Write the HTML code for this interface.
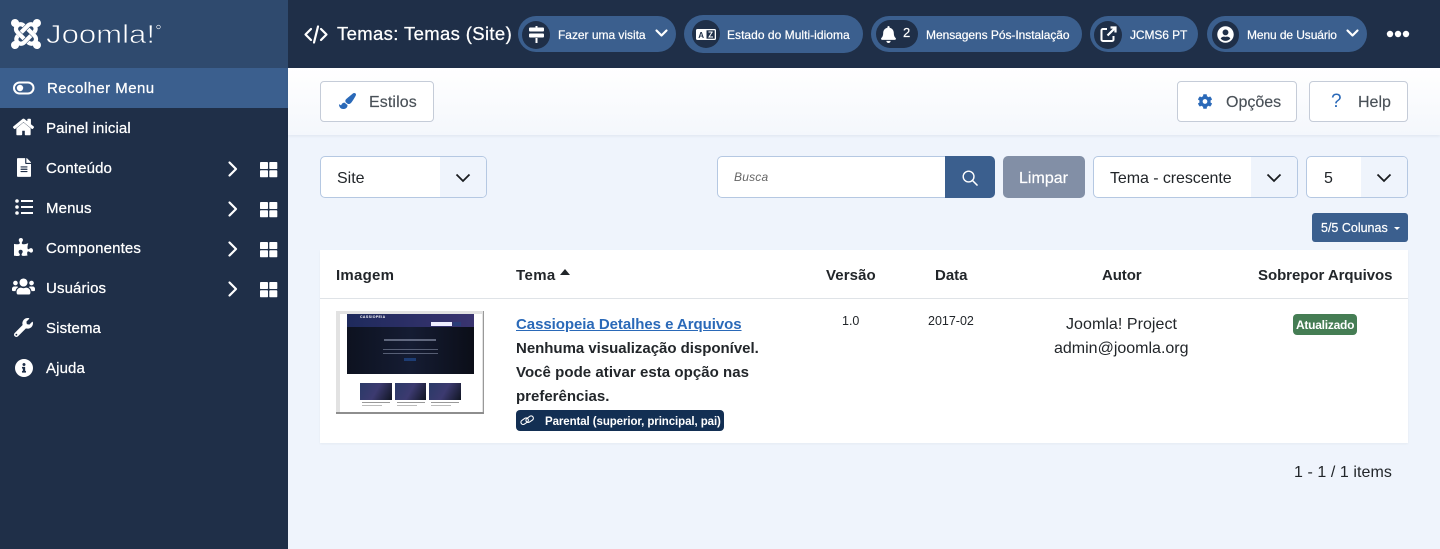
<!DOCTYPE html>
<html lang="pt"><head><meta charset="utf-8"><title>Temas</title>
<style>
html,body{margin:0;padding:0;width:1440px;height:549px;overflow:hidden;background:#eff4fc;font-family:"Liberation Sans",sans-serif;color:#22262a}
.a{position:absolute}
.t{position:absolute;white-space:nowrap}
svg{position:absolute;overflow:visible}
.nav{color:#fff;font-size:15px;line-height:20px;-webkit-text-stroke:.25px #fff;letter-spacing:.12px}
.pill{position:absolute;top:16px;height:36px;background:#3b5f8e;border-radius:18px}
.circ{position:absolute;background:#1f2f48;border-radius:14px;top:21px;height:28px}
.pt{position:absolute;white-space:nowrap;color:#fff;font-size:12px;line-height:20px;top:25px;-webkit-text-stroke:.2px #fff}
.btn{position:absolute;top:81px;height:39px;background:#fff;border:1px solid #c5ccd8;border-radius:4px}
.bt{position:absolute;white-space:nowrap;top:93px;font-size:16px;line-height:20px;color:#495057;-webkit-text-stroke:.15px #495057}
.sel{position:absolute;top:156px;height:40px;background:#fff;border:1px solid #b5c8e2;border-radius:5px;overflow:hidden}
.sel i{position:absolute;right:0;top:0;bottom:0;background:#eff4fc}
.st{position:absolute;white-space:nowrap;top:169px;font-size:16px;line-height:20px;color:#22262a}
.th{position:absolute;white-space:nowrap;top:266px;font-size:15px;line-height:20px;font-weight:bold;color:#22262a}
.c{stroke:#fff;fill:none;stroke-width:2.2;stroke-linecap:round;stroke-linejoin:round}
</style></head><body>

<div class="a" style="left:0;top:0;width:288px;height:549px;background:#1f2f48"></div>
<div class="a" style="left:0;top:0;width:288px;height:68px;background:#2f4a6e"></div>
<div class="a" style="left:0;top:68px;width:288px;height:40px;background:#3b5f8e"></div>
<div class="a" style="left:288px;top:0;width:1152px;height:68px;background:#1f2f48"></div>
<div class="a" style="left:288px;top:68px;width:1152px;height:67px;background:linear-gradient(#fff,#f4f7fc);box-shadow:0 1px 3px rgba(30,50,80,.08)"></div>

<!-- logo -->
<svg style="left:11px;top:19px" width="30" height="30" viewBox="0 32 448 448" fill="#fff">
<g><path d="M.6 92.1C.6 58.8 27.4 32 60.4 32c30 0 54.5 21.9 59.2 50.2 32.6-7.6 67.1.6 96.5 30l-44.3 44.3c-20.5-20.5-42.6-16.3-55.4-3.5-14.3 14.3-14.3 37.9 0 52.2l99.5 99.5-44 44.3c-87.7-87.2-49.7-49.7-99.8-99.7-26.8-26.5-35-64.8-24.8-98.9C20.4 144.6.6 120.7.6 92.1z"/><path d="M130.1 208.5l44.3 44.3c10-10 89.7-89.7 99.7-99.8 14.3-14.3 37.6-14.3 51.9 0 12.8 12.8 17 35-3.5 55.4l44 44.3c31.2-31.2 38.5-67.6 28.9-101.2 29.2-4.100 51.9-29.2 51.9-59.5 0-33.2-26.8-60.1-59.8-60.1-30.3 0-55.4 22.5-59.5 51.6-33.8-9.900-71.7-1.500-98.3 25.1-18.3 19.100-71.1 71.500-100.600 101.100z"/></g>
<g transform="rotate(180 224 256)"><path d="M.6 92.1C.6 58.8 27.4 32 60.4 32c30 0 54.5 21.9 59.2 50.2 32.6-7.6 67.1.6 96.5 30l-44.3 44.3c-20.5-20.5-42.6-16.3-55.4-3.5-14.3 14.3-14.3 37.9 0 52.2l99.5 99.5-44 44.3c-87.7-87.2-49.7-49.7-99.8-99.7-26.8-26.5-35-64.8-24.8-98.9C20.4 144.6.6 120.7.6 92.1z"/><path d="M130.1 208.5l44.3 44.3c10-10 89.7-89.7 99.7-99.8 14.3-14.3 37.6-14.3 51.9 0 12.8 12.8 17 35-3.5 55.4l44 44.3c31.2-31.2 38.5-67.6 28.9-101.2 29.2-4.100 51.9-29.2 51.9-59.5 0-33.2-26.8-60.1-59.8-60.1-30.3 0-55.4 22.5-59.5 51.6-33.8-9.900-71.7-1.500-98.3 25.1-18.3 19.100-71.1 71.500-100.600 101.100z"/></g>
</svg>
<svg style="left:46px;top:18px" width="120" height="30" viewBox="0 0 120 30">
<text x="0" y="25" font-family="Liberation Sans" font-size="26" fill="#fff" stroke="#2f4a6e" stroke-width=".7" textLength="109" lengthAdjust="spacingAndGlyphs">Joomla!</text>
<circle cx="112.500" cy="9" r="1.800" fill="none" stroke="#fff" stroke-width=".6"/>
</svg>

<!-- sidebar -->
<svg style="left:13px;top:81px" width="22" height="14" viewBox="0 0 22 14"><rect x="1" y="1.500" width="19.500" height="11" rx="5.500" fill="none" stroke="#fff" stroke-width="2"/><circle cx="7" cy="7" r="3.200" fill="#fff"/></svg>
<div class="t nav" style="left:47px;top:79px;letter-spacing:.45px">Recolher Menu</div>

<svg style="left:13px;top:118px" width="21" height="18" viewBox="0 0 576 512" fill="#fff" stroke="#fff" stroke-width="22"><path d="M280.37 148.26L96 300.11V464a16 16 0 0 0 16 16l112.06-.29a16 16 0 0 0 15.92-16V368a16 16 0 0 1 16-16h64a16 16 0 0 1 16 16v95.64a16 16 0 0 0 16 16.05L464 480a16 16 0 0 0 16-16V300L295.67 148.26a12.19 12.19 0 0 0-15.3 0zM571.6 251.47L488 182.56V44.05a12 12 0 0 0-12-12h-56a12 12 0 0 0-12 12v72.61L318.47 43a48 48 0 0 0-61 0L4.34 251.47a12 12 0 0 0-1.6 16.9l25.5 31A12 12 0 0 0 45.15 301l235.22-193.74a12.19 12.19 0 0 1 15.3 0L530.9 301a12 12 0 0 0 16.9-1.6l25.5-31a12 12 0 0 0-1.7-16.93z"/></svg>
<div class="t nav" style="left:46px;top:119px;letter-spacing:.1px">Painel inicial</div>

<svg style="left:17px;top:158px" width="14" height="19" viewBox="0 0 384 512" fill="#fff"><path d="M224 136V0H24C10.7 0 0 10.7 0 24v464c0 13.3 10.700 24 24 24h336c13.300 0 24-10.700 24-24V160H248c-13.200 0-24-10.800-24-24zm64 236c0 6.600-5.400 12-12 12H108c-6.600 0-12-5.400-12-12v-8c0-6.600 5.400-12 12-12h168c6.600 0 12 5.400 12 12v8zm0-64c0 6.600-5.400 12-12 12H108c-6.600 0-12-5.400-12-12v-8c0-6.600 5.400-12 12-12h168c6.600 0 12 5.400 12 12v8zm0-72v8c0 6.600-5.400 12-12 12H108c-6.600 0-12-5.400-12-12v-8c0-6.600 5.400-12 12-12h168c6.600 0 12 5.400 12 12zm96-114.100v6.100H256V0h6.100c6.400 0 12.500 2.500 17 7l97.900 98c4.500 4.500 7 10.600 7 16.900z"/></svg>
<div class="t nav" style="left:46px;top:159px">Conteúdo</div>

<svg style="left:15px;top:199px" width="18" height="16" viewBox="0 0 18 16" fill="#fff"><circle cx="2" cy="2" r="1.800"/><circle cx="2" cy="8" r="1.800"/><circle cx="2" cy="14" r="1.800"/><rect x="6" y="1" width="12" height="2"/><rect x="6" y="7" width="12" height="2"/><rect x="6" y="13" width="12" height="2"/></svg>
<div class="t nav" style="left:46px;top:199px">Menus</div>

<svg style="left:14px;top:238px" width="19" height="18" viewBox="0 0 576 512" fill="#fff" preserveAspectRatio="none"><path d="M519.442 288.651c-41.519 0-59.5 31.593-82.058 31.593C377.409 320.244 432 144 432 144s-196.288 80-196.288-3.297c0-35.827 36.288-46.250 36.288-85.985C272 19.216 243.885 0 210.539 0c-34.654 0-66.366 18.891-66.366 56.346 0 41.364 31.711 59.277 31.711 81.750C175.885 207.719 0 166.758 0 166.758v333.237s178.635 41.047 178.635-28.662c0-22.473-40-40.107-40-81.471 0-37.456 29.250-56.346 63.577-56.346 33.673 0 61.788 19.216 61.788 54.717 0 39.735-36.288 50.158-36.288 85.985 0 60.803 129.675 25.730 181.230 25.730 0 0-34.725-120.101 25.827-120.101 35.962 0 46.423 36.152 86.308 36.152C556.712 416 576 387.990 576 354.443c0-34.199-18.962-65.792-56.558-65.792z"/></svg>
<div class="t nav" style="left:46px;top:239px;letter-spacing:.15px">Componentes</div>

<svg style="left:12px;top:277px" width="23" height="19" viewBox="0 0 640 512" fill="#fff"><path d="M96 224c35.300 0 64-28.700 64-64s-28.700-64-64-64-64 28.700-64 64 28.700 64 64 64zm448 0c35.300 0 64-28.700 64-64s-28.700-64-64-64-64 28.700-64 64 28.700 64 64 64zm32 32h-64c-17.600 0-33.500 7.100-45.100 18.600 40.300 22.100 68.900 62 75.100 109.400h66c17.700 0 32-14.300 32-32v-32c0-35.300-28.700-64-64-64zm-256 0c61.900 0 112-50.100 112-112S381.900 32 320 32 208 82.100 208 144s50.100 112 112 112zm76.800 32h-8.300c-20.800 10-43.900 16-68.500 16s-47.600-6-68.500-16h-8.300C179.600 288 128 339.600 128 403.200V432c0 26.500 21.500 48 48 48h288c26.500 0 48-21.500 48-48v-28.800c0-63.600-51.600-115.200-115.200-115.200zm-223.700-13.400C161.500 263.100 145.600 256 128 256H64c-35.300 0-64 28.700-64 64v32c0 17.700 14.300 32 32 32h65.900c6.300-47.400 34.900-87.300 75.200-109.400z"/></svg>
<div class="t nav" style="left:46px;top:279px">Usuários</div>

<svg style="left:14px;top:318px" width="19" height="19" viewBox="0 0 512 512" fill="#fff"><path d="M507.730 109.100c-2.240-9.030-13.540-12.090-20.120-5.510l-74.360 74.360-67.880-11.310-11.310-67.880 74.360-74.360c6.620-6.620 3.430-17.900-5.660-20.160-47.380-11.740-99.550.91-136.580 37.930-39.640 39.640-50.550 97.100-34.050 147.200L18.740 402.760c-24.990 24.990-24.990 65.510 0 90.500 24.990 24.990 65.510 24.990 90.500 0l213.210-213.210c50.120 16.710 107.470 5.680 147.370-34.220 37.070-37.070 49.700-89.320 37.910-136.730zM64 472c-13.250 0-24-10.750-24-24 0-13.260 10.750-24 24-24s24 10.740 24 24c0 13.250-10.750 24-24 24z"/></svg>
<div class="t nav" style="left:46px;top:319px">Sistema</div>

<svg style="left:14.500px;top:358.500px" width="18" height="18" viewBox="8 8 496 496" fill="#fff"><path d="M256 8C119.043 8 8 119.083 8 256c0 136.997 111.043 248 248 248s248-111.003 248-248C504 119.083 392.957 8 256 8zm0 110c23.196 0 42 18.804 42 42s-18.804 42-42 42-42-18.804-42-42 18.804-42 42-42zm56 254c0 6.627-5.373 12-12 12h-88c-6.627 0-12-5.373-12-12v-24c0-6.627 5.373-12 12-12h12v-64h-12c-6.627 0-12-5.373-12-12v-24c0-6.627 5.373-12 12-12h64c6.627 0 12 5.373 12 12v100h12c6.627 0 12 5.373 12 12v24z"/></svg>
<div class="t nav" style="left:46px;top:359px">Ajuda</div>

<!-- chevrons and grids -->
<svg style="left:228px;top:160.500px" width="10" height="16" viewBox="0 0 10 16"><path class="c" d="M1.500 1.500L8 8l-6.500 6.500"/></svg>
<svg style="left:228px;top:200.500px" width="10" height="16" viewBox="0 0 10 16"><path class="c" d="M1.500 1.500L8 8l-6.500 6.500"/></svg>
<svg style="left:228px;top:240.500px" width="10" height="16" viewBox="0 0 10 16"><path class="c" d="M1.500 1.500L8 8l-6.500 6.500"/></svg>
<svg style="left:228px;top:280.500px" width="10" height="16" viewBox="0 0 10 16"><path class="c" d="M1.500 1.500L8 8l-6.500 6.500"/></svg>
<svg style="left:260px;top:162px" width="17" height="15" fill="#fff"><rect width="8" height="7" rx=".8"/><rect x="9.300" width="8" height="7" rx=".8"/><rect y="8.300" width="8" height="7" rx=".8"/><rect x="9.300" y="8.300" width="8" height="7" rx=".8"/></svg>
<svg style="left:260px;top:202px" width="17" height="15" fill="#fff"><rect width="8" height="7" rx=".8"/><rect x="9.300" width="8" height="7" rx=".8"/><rect y="8.300" width="8" height="7" rx=".8"/><rect x="9.300" y="8.300" width="8" height="7" rx=".8"/></svg>
<svg style="left:260px;top:242px" width="17" height="15" fill="#fff"><rect width="8" height="7" rx=".8"/><rect x="9.300" width="8" height="7" rx=".8"/><rect y="8.300" width="8" height="7" rx=".8"/><rect x="9.300" y="8.300" width="8" height="7" rx=".8"/></svg>
<svg style="left:260px;top:282px" width="17" height="15" fill="#fff"><rect width="8" height="7" rx=".8"/><rect x="9.300" width="8" height="7" rx=".8"/><rect y="8.300" width="8" height="7" rx=".8"/><rect x="9.300" y="8.300" width="8" height="7" rx=".8"/></svg>

<!-- header -->
<svg style="left:304px;top:25px" width="24" height="19" viewBox="0 0 24 19"><path class="c" d="M7 4L1.500 9.500 7 15M17 4l5.500 5.500L17 15M14 1.500L10 17.500" stroke-width="2"/></svg>
<div class="t" style="left:337px;top:23px;font-size:18.500px;line-height:22px;color:#fff;-webkit-text-stroke:.25px #fff;letter-spacing:.36px">Temas: Temas (Site)</div>

<div class="pill" style="left:518px;width:158px"></div>
<div class="circ" style="left:522px;width:28px"></div>
<svg style="left:529px;top:26px" width="15" height="17" viewBox="0 0 15 17" fill="#fff"><rect x="0" y="1.500" width="15" height="4" rx="1"/><rect x="0" y="7.500" width="15" height="4" rx="1"/><rect x="6.500" y="0" width="2" height="2"/><rect x="6.500" y="12" width="2" height="5"/></svg>
<div class="pt" style="left:558px;letter-spacing:-.03px">Fazer uma visita</div>
<svg style="left:655px;top:29px" width="13" height="9" viewBox="0 0 13 9"><path class="c" d="M1.500 1.500l5 5 5-5"/></svg>

<div class="pill" style="left:684px;width:179px;top:15px;height:38px;border-radius:19px"></div>
<div class="circ" style="left:692px;width:28px;top:20px"></div>
<svg style="left:696px;top:29px" width="20" height="11" viewBox="0 0 20 11"><rect width="20" height="11" rx="1.500" fill="#fff"/><rect x="10.500" y="1.300" width="8.200" height="8.400" fill="#1f2f48"/><path d="M12.500 3h4.200M16.200 3L13 8h4" fill="none" stroke="#fff" stroke-width="1"/><text x="2.300" y="8.800" font-size="8" font-weight="bold" fill="#1f2f48" font-family="Liberation Sans">A</text></svg>
<div class="pt" style="left:727px;letter-spacing:.03px">Estado do Multi-idioma</div>

<div class="pill" style="left:871px;width:211px"></div>
<div class="circ" style="left:876px;width:42px;top:20px"></div>
<svg style="left:881px;top:26px" width="15" height="17" viewBox="0 0 448 512" fill="#fff"><path d="M224 512c35.320 0 63.970-28.650 63.970-64H160.030c0 35.350 28.650 64 63.970 64zm215.390-149.710c-19.320-20.760-55.470-51.990-55.470-154.290 0-77.700-54.480-139.900-127.940-155.160V32c0-17.670-14.320-32-31.980-32s-31.980 14.330-31.980 32v20.840C118.560 68.100 64.080 130.300 64.080 208c0 102.300-36.150 133.530-55.470 154.290-6 6.450-8.660 14.160-8.610 21.710.11 16.400 12.980 32 32.100 32h383.800c19.120 0 32-15.600 32.100-32 .05-7.550-2.610-15.270-8.610-21.710z"/></svg>
<div class="pt" style="left:903px;top:23px;font-size:13px">2</div>
<div class="pt" style="left:926px;letter-spacing:-.05px">Mensagens Pós-Instalação</div>

<div class="pill" style="left:1090px;width:108px"></div>
<div class="circ" style="left:1094px;width:28px"></div>
<svg style="left:1100px;top:26px" width="17" height="17" viewBox="0 0 17 17"><path d="M7 3H3a1.500 1.500 0 0 0-1.500 1.500v9A1.500 1.500 0 0 0 3 15h9a1.500 1.500 0 0 0 1.500-1.500V10" fill="none" stroke="#fff" stroke-width="2"/><path d="M7.500 9.500L15 2M10.500 1.500h5v5" fill="none" stroke="#fff" stroke-width="2.200"/></svg>
<div class="pt" style="left:1130px;letter-spacing:-.1px">JCMS6 PT</div>

<div class="pill" style="left:1207px;width:160px"></div>
<div class="circ" style="left:1212px;width:27px"></div>
<svg style="left:1217px;top:26px" width="17" height="17" viewBox="0 0 496 512" fill="#fff"><path d="M248 8C111 8 0 119 0 256s111 248 248 248 248-111 248-248S385 8 248 8zm0 96c48.600 0 88 39.400 88 88s-39.400 88-88 88-88-39.400-88-88 39.400-88 88-88zm0 344c-58.700 0-111.300-26.600-146.500-68.200 18.800-35.400 55.600-59.800 98.500-59.800 2.400 0 4.800.4 7.100 1.100 13 4.200 26.600 6.900 40.900 6.900 14.300 0 28-2.700 40.900-6.900 2.300-.7 4.700-1.100 7.100-1.100 42.900 0 79.700 24.400 98.500 59.800C359.300 421.400 306.700 448 248 448z"/></svg>
<div class="pt" style="left:1247px;letter-spacing:-.1px">Menu de Usuário</div>
<svg style="left:1346px;top:29px" width="13" height="9" viewBox="0 0 13 9"><path class="c" d="M1.500 1.500l5 5 5-5"/></svg>
<svg style="left:1386px;top:30px" width="24" height="8" fill="#fff"><circle cx="4" cy="4" r="3.200"/><circle cx="12" cy="4" r="3.200"/><circle cx="20" cy="4" r="3.200"/></svg>

<!-- toolbar -->
<div class="btn" style="left:320px;width:112px"></div>
<svg style="left:339px;top:93px" width="17" height="16" viewBox="0 0 512 512" preserveAspectRatio="none" fill="#2a69b8"><path d="M167.020 309.340c-40.120 2.580-76.530 17.860-97.190 72.300-2.350 6.210-8 9.980-14.590 9.980-11.110 0-45.460-27.670-55.250-34.350C0 439.620 37.930 512 128 512c75.860 0 128-43.770 128-120.190 0-3.110-.65-6.080-.97-9.130l-88.010-73.340zM457.890 0c-15.160 0-29.370 6.710-40.210 16.450C213.270 199.050 192 203.340 192 257.090c0 13.700 3.250 26.760 8.730 38.700l63.820 53.180c7.210 1.800 14.640 3.030 22.390 3.030 62.110 0 98.110-45.470 211.160-256.460 7.380-14.350 13.900-29.850 13.900-45.990C512 20.640 486 0 457.890 0z"/></svg>
<div class="bt" style="left:369px;letter-spacing:.1px">Estilos</div>

<div class="btn" style="left:1177px;width:118px"></div>
<svg style="left:1196.500px;top:94px" width="16" height="15" viewBox="0 0 512 512" fill="#2a69b8"><path d="M487.400 315.700l-42.600-24.600c4.300-23.200 4.300-47 0-70.200l42.600-24.600c4.900-2.800 7.100-8.600 5.500-14-11.100-35.600-30-67.800-54.700-94.600-3.800-4.100-10-5.100-14.800-2.300L380.800 110c-17.900-15.400-38.500-27.300-60.800-35.100V25.800c0-5.600-3.900-10.500-9.400-11.700-36.700-8.200-74.300-7.800-109.200 0-5.500 1.200-9.400 6.100-9.400 11.700V75c-22.200 7.900-42.800 19.800-60.800 35.100L88.700 85.500c-4.900-2.800-11-1.900-14.800 2.300-24.700 26.700-43.600 58.900-54.700 94.600-1.700 5.400.6 11.200 5.500 14L67.300 221c-4.300 23.200-4.300 47 0 70.200l-42.600 24.600c-4.900 2.800-7.100 8.600-5.500 14 11.100 35.600 30 67.800 54.700 94.600 3.800 4.100 10 5.100 14.800 2.300l42.600-24.600c17.900 15.400 38.500 27.300 60.800 35.100v49.200c0 5.600 3.900 10.500 9.400 11.700 36.700 8.200 74.300 7.800 109.200 0 5.500-1.200 9.400-6.100 9.400-11.700v-49.200c22.200-7.900 42.800-19.800 60.800-35.100l42.600 24.600c4.900 2.800 11 1.900 14.800-2.300 24.700-26.700 43.600-58.900 54.700-94.600 1.500-5.500-.7-11.300-5.600-14.100zM256 336c-44.100 0-80-35.900-80-80s35.900-80 80-80 80 35.900 80 80-35.900 80-80 80z"/></svg>
<div class="bt" style="left:1226px">Opções</div>

<div class="btn" style="left:1309px;width:97px"></div>
<div class="t" style="left:1331px;top:92px;font-size:19px;line-height:20px;color:#2a69b8">?</div>
<div class="bt" style="left:1358px">Help</div>

<!-- filters -->
<div class="sel" style="left:320px;width:165px"><i style="width:46px"></i></div>
<div class="st" style="left:337px">Site</div>
<svg style="left:455px;top:173px" width="16" height="10" viewBox="0 0 16 10"><path d="M1.500 1.500L8 8l6.500-6.500" fill="none" stroke="#1a1d20" stroke-width="1.800"/></svg>

<div class="a" style="left:717px;top:156px;width:228px;height:40px;background:#fff;border:1px solid #b5c8e2;border-right:0;border-radius:5px 0 0 5px"></div>
<div class="t" style="left:734px;top:167px;font-size:12px;line-height:20px;font-style:italic;color:#666;letter-spacing:.2px">Busca</div>
<div class="a" style="left:945px;top:156px;width:50px;height:42px;background:#3b5f8e;border-radius:0 5px 5px 0"></div>
<svg style="left:962px;top:169.500px" width="16" height="16" viewBox="0 0 17 17"><circle cx="7" cy="7" r="5.700" fill="none" stroke="#fff" stroke-width="1.500"/><path d="M11 11l5 5" stroke="#fff" stroke-width="1.600" stroke-linecap="round"/></svg>
<div class="a" style="left:1003px;top:156px;width:82px;height:42px;background:#828fa6;border-radius:5px"></div>
<div class="t" style="left:1019px;top:169px;font-size:16px;line-height:20px;color:#fff;-webkit-text-stroke:.2px #fff;letter-spacing:.02px">Limpar</div>

<div class="sel" style="left:1093px;width:203px"><i style="width:46px"></i></div>
<div class="st" style="left:1110px;letter-spacing:-.07px">Tema - crescente</div>
<svg style="left:1266px;top:173px" width="16" height="10" viewBox="0 0 16 10"><path d="M1.500 1.500L8 8l6.500-6.500" fill="none" stroke="#1a1d20" stroke-width="1.800"/></svg>

<div class="sel" style="left:1306px;width:100px"><i style="width:46px"></i></div>
<div class="st" style="left:1324px">5</div>
<svg style="left:1376px;top:173px" width="16" height="10" viewBox="0 0 16 10"><path d="M1.500 1.500L8 8l6.500-6.500" fill="none" stroke="#1a1d20" stroke-width="1.800"/></svg>

<div class="a" style="left:1312px;top:213px;width:96px;height:29px;background:#3b5f8e;border-radius:3px"></div>
<div class="t" style="left:1321px;top:218px;font-size:12.500px;line-height:20px;color:#fff;-webkit-text-stroke:.2px #fff">5/5 Colunas</div>
<div class="a" style="left:1393.500px;top:227px;border:3px solid transparent;border-top-color:#fff;border-bottom:0"></div>

<!-- table -->
<div class="a" style="left:320px;top:250px;width:1088px;height:193px;background:#fff;box-shadow:0 1px 2px rgba(30,50,80,.05)"></div>
<div class="a" style="left:320px;top:298px;width:1088px;height:1px;background:#dfe3e7"></div>
<div class="th" style="left:336px;letter-spacing:.25px">Imagem</div>
<div class="th" style="left:516px;letter-spacing:.4px">Tema</div>
<div class="a" style="left:560px;top:269px;border:5px solid transparent;border-bottom:6px solid #22262a;border-top:0"></div>
<div class="th" style="left:826px;letter-spacing:.1px">Versão</div>
<div class="th" style="left:935px">Data</div>
<div class="th" style="left:1102px;letter-spacing:-.1px">Autor</div>
<div class="th" style="left:1258px;letter-spacing:-.05px">Sobrepor Arquivos</div>

<!-- thumbnail -->
<div class="a" style="left:336px;top:311px;width:148px;height:103px;background:#e2e2e2"></div>
<div class="a" style="left:483px;top:311px;width:1px;height:103px;background:#999"></div>
<div class="a" style="left:336px;top:412px;width:148px;height:2px;background:#8e8e8e"></div>
<div class="a" style="left:340px;top:314px;width:142px;height:98px;background:#fff"></div>
<div class="a" style="left:347px;top:314px;width:127px;height:60px;background:linear-gradient(90deg,#0d1220,#151c33 50%,#0b0e18)"></div>
<div class="a" style="left:347px;top:314px;width:127px;height:13px;background:linear-gradient(90deg,#1e2a5c,#3a3470)"></div>
<div class="t" style="left:360px;top:315px;font-size:3.500px;line-height:5px;font-weight:bold;color:#fff;letter-spacing:.4px">CASSIOPEIA</div>
<div class="a" style="left:431px;top:322px;width:21px;height:4px;background:#eef"></div>
<div class="a" style="left:453px;top:322px;width:8px;height:4px;background:#2a3d78"></div>
<div class="a" style="left:384px;top:339px;width:52px;height:2px;background:rgba(190,200,225,.45)"></div>
<div class="a" style="left:383px;top:349px;width:55px;height:1px;background:rgba(190,200,225,.4)"></div>
<div class="a" style="left:383px;top:353px;width:55px;height:1px;background:rgba(190,200,225,.4)"></div>
<div class="a" style="left:404px;top:358px;width:12px;height:3px;background:#1d3c73"></div>
<div class="a" style="left:360px;top:383px;width:32px;height:17px;background:linear-gradient(120deg,#2a3a68,#3c3a70 50%,#101522)"></div>
<div class="a" style="left:395px;top:383px;width:31px;height:17px;background:linear-gradient(120deg,#2a3a68,#3c3a70 50%,#101522)"></div>
<div class="a" style="left:429px;top:383px;width:32px;height:17px;background:linear-gradient(120deg,#2a3a68,#3c3a70 50%,#101522)"></div>
<div class="a" style="left:362px;top:402px;width:28px;height:1px;background:#999"></div>
<div class="a" style="left:397px;top:402px;width:28px;height:1px;background:#999"></div>
<div class="a" style="left:431px;top:402px;width:28px;height:1px;background:#999"></div>
<div class="a" style="left:362px;top:405px;width:20px;height:1px;background:#bbb"></div>
<div class="a" style="left:397px;top:405px;width:20px;height:1px;background:#bbb"></div>
<div class="a" style="left:431px;top:405px;width:20px;height:1px;background:#bbb"></div>

<!-- row -->
<div class="t" style="left:516px;top:315px;font-size:15px;line-height:20px;font-weight:bold;color:#2a69b8;text-decoration:underline;letter-spacing:-.05px">Cassiopeia Detalhes e Arquivos</div>
<div class="t" style="left:516px;top:339px;font-size:15px;line-height:20px;font-weight:bold;letter-spacing:-.02px">Nenhuma visualização disponível.</div>
<div class="t" style="left:516px;top:363px;font-size:15px;line-height:20px;font-weight:bold;letter-spacing:.05px">Você pode ativar esta opção nas</div>
<div class="t" style="left:516px;top:387px;font-size:15px;line-height:20px;font-weight:bold">preferências.</div>
<div class="a" style="left:516px;top:410px;width:208px;height:21px;background:#132f53;border-radius:4px"></div>
<svg style="left:520px;top:414px" width="14" height="13" viewBox="0 0 14 13" fill="none" stroke="#fff" stroke-width="1.100"><rect x=".5" y="5" width="8" height="4.500" rx="2.200" transform="rotate(-35 4.500 7)"/><rect x="5.500" y="3" width="8" height="4.500" rx="2.200" transform="rotate(-35 9.500 5)"/></svg>
<div class="t" style="left:545px;top:412px;font-size:11.500px;line-height:20px;font-weight:bold;color:#fff;letter-spacing:-.09px">Parental (superior, principal, pai)</div>

<div class="t" style="left:842px;top:311px;font-size:12.500px;line-height:20px">1.0</div>
<div class="t" style="left:928px;top:311px;font-size:12.500px;line-height:20px">2017-02</div>
<div class="t" style="left:1066px;top:315px;font-size:16px;line-height:20px;letter-spacing:.05px">Joomla! Project</div>
<div class="t" style="left:1054px;top:339px;font-size:16px;line-height:20px">admin@joomla.org</div>
<div class="a" style="left:1293px;top:314px;width:64px;height:21px;background:#457d54;border-radius:4px"></div>
<div class="t" style="left:1296px;top:315px;font-size:12px;line-height:20px;font-weight:bold;color:#fff;letter-spacing:-.25px">Atualizado</div>

<div class="t" style="left:1294px;top:463px;font-size:16px;line-height:20px;letter-spacing:.07px">1 - 1 / 1 items</div>

</body></html>
